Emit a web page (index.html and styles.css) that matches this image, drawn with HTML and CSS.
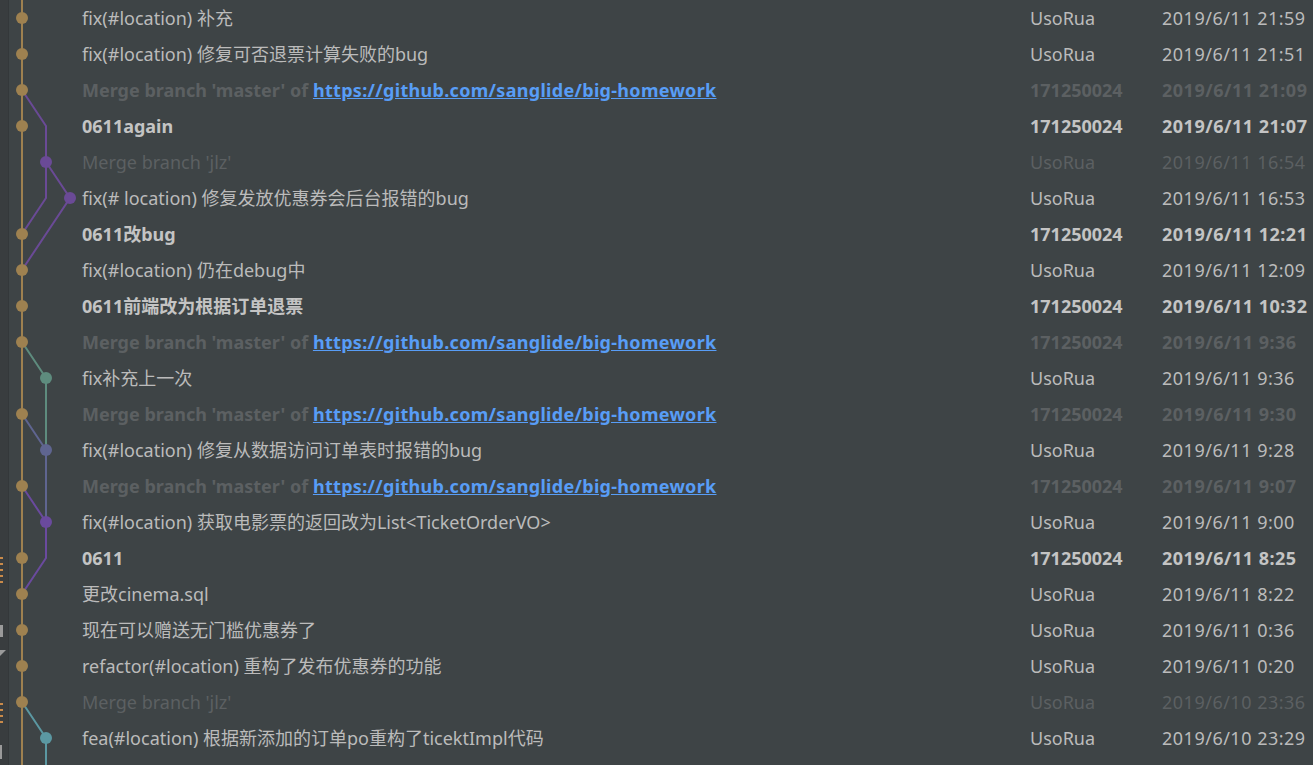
FILE: index.html
```html
<!DOCTYPE html>
<html>
<head>
<meta charset="utf-8">
<link rel="stylesheet" href="styles.css">
</head>
<body>
<div class="page">
  <div class="strip">
    <svg class="strip-marks" width="8" height="765" viewBox="0 0 8 765">
      <g fill="#c98a4a">
        <rect x="0" y="557" width="3" height="2"/><rect x="0" y="563" width="3" height="2"/><rect x="0" y="569" width="3" height="2"/><rect x="0" y="575" width="3" height="2"/><rect x="0" y="581" width="3" height="2"/>
        <rect x="0" y="703" width="3" height="2"/><rect x="0" y="709" width="3" height="2"/><rect x="0" y="715" width="3" height="2"/><rect x="0" y="721" width="3" height="2"/>
      </g>
      <g fill="#9a9a9a">
        <rect x="0" y="625" width="3" height="12"/>
        <path d="M0 650 L6 650 L0 656 Z"/>
        <rect x="0" y="745" width="2" height="14"/>
      </g>
    </svg>
  </div>
  <svg class="graph" width="100" height="765" viewBox="0 0 100 765">
    <g fill="none" stroke-width="2">
      <line x1="22" y1="0" x2="22" y2="765" stroke="#9e8150"/>
      <polyline points="22,90 46,126 46,198 22,234" stroke="#6a4a96"/>
      <polyline points="46,162 70,198 22,270" stroke="#6a4a96"/>
      <polyline points="22,342 46,378 46,450" stroke="#5e8c7e"/>
      <polyline points="22,414 46,450 46,522" stroke="#5f6590"/>
      <polyline points="22,486 46,522 46,558 22,594" stroke="#6a4a9e"/>
      <polyline points="22,702 46,738 46,765" stroke="#5b98a2"/>
    </g>
    <g fill="#9e8150">
      <circle cx="22" cy="18" r="6"/><circle cx="22" cy="54" r="6"/><circle cx="22" cy="90" r="6"/><circle cx="22" cy="126" r="6"/>
      <circle cx="22" cy="234" r="6"/><circle cx="22" cy="270" r="6"/><circle cx="22" cy="306" r="6"/><circle cx="22" cy="342" r="6"/>
      <circle cx="22" cy="414" r="6"/><circle cx="22" cy="486" r="6"/><circle cx="22" cy="558" r="6"/><circle cx="22" cy="594" r="6"/>
      <circle cx="22" cy="630" r="6"/><circle cx="22" cy="666" r="6"/><circle cx="22" cy="702" r="6"/>
    </g>
    <circle cx="46" cy="162" r="6" fill="#6a4a96"/>
    <circle cx="70" cy="198" r="6" fill="#6a4a96"/>
    <circle cx="46" cy="378" r="6" fill="#5e8c7e"/>
    <circle cx="46" cy="450" r="6" fill="#5f6590"/>
    <circle cx="46" cy="522" r="6" fill="#6a4a9e"/>
    <circle cx="46" cy="738" r="6" fill="#5b98a2"/>
  </svg>
  <div class="log">
    <div class="row"><span class="msg">fix(#location) 补充</span><span class="author">UsoRua</span><span class="date">2019/6/11 21:59</span></div>
    <div class="row"><span class="msg">fix(#location) 修复可否退票计算失败的bug</span><span class="author">UsoRua</span><span class="date">2019/6/11 21:51</span></div>
    <div class="row dim bold"><span class="msg">Merge branch 'master' of <a class="link">https://github.com/sanglide/big-homework</a></span><span class="author">171250024</span><span class="date">2019/6/11 21:09</span></div>
    <div class="row bold"><span class="msg">0611again</span><span class="author">171250024</span><span class="date">2019/6/11 21:07</span></div>
    <div class="row dim"><span class="msg">Merge branch 'jlz'</span><span class="author">UsoRua</span><span class="date">2019/6/11 16:54</span></div>
    <div class="row"><span class="msg">fix(# location) 修复发放优惠券会后台报错的bug</span><span class="author">UsoRua</span><span class="date">2019/6/11 16:53</span></div>
    <div class="row bold"><span class="msg">0611改bug</span><span class="author">171250024</span><span class="date">2019/6/11 12:21</span></div>
    <div class="row"><span class="msg">fix(#location) 仍在debug中</span><span class="author">UsoRua</span><span class="date">2019/6/11 12:09</span></div>
    <div class="row bold"><span class="msg">0611前端改为根据订单退票</span><span class="author">171250024</span><span class="date">2019/6/11 10:32</span></div>
    <div class="row dim bold"><span class="msg">Merge branch 'master' of <a class="link">https://github.com/sanglide/big-homework</a></span><span class="author">171250024</span><span class="date">2019/6/11 9:36</span></div>
    <div class="row"><span class="msg">fix补充上一次</span><span class="author">UsoRua</span><span class="date">2019/6/11 9:36</span></div>
    <div class="row dim bold"><span class="msg">Merge branch 'master' of <a class="link">https://github.com/sanglide/big-homework</a></span><span class="author">171250024</span><span class="date">2019/6/11 9:30</span></div>
    <div class="row"><span class="msg">fix(#location) 修复从数据访问订单表时报错的bug</span><span class="author">UsoRua</span><span class="date">2019/6/11 9:28</span></div>
    <div class="row dim bold"><span class="msg">Merge branch 'master' of <a class="link">https://github.com/sanglide/big-homework</a></span><span class="author">171250024</span><span class="date">2019/6/11 9:07</span></div>
    <div class="row"><span class="msg">fix(#location) 获取电影票的返回改为List&lt;TicketOrderVO&gt;</span><span class="author">UsoRua</span><span class="date">2019/6/11 9:00</span></div>
    <div class="row bold"><span class="msg">0611</span><span class="author">171250024</span><span class="date">2019/6/11 8:25</span></div>
    <div class="row"><span class="msg">更改cinema.sql</span><span class="author">UsoRua</span><span class="date">2019/6/11 8:22</span></div>
    <div class="row"><span class="msg">现在可以赠送无门槛优惠券了</span><span class="author">UsoRua</span><span class="date">2019/6/11 0:36</span></div>
    <div class="row"><span class="msg">refactor(#location) 重构了发布优惠券的功能</span><span class="author">UsoRua</span><span class="date">2019/6/11 0:20</span></div>
    <div class="row dim"><span class="msg">Merge branch 'jlz'</span><span class="author">UsoRua</span><span class="date">2019/6/10 23:36</span></div>
    <div class="row"><span class="msg">fea(#location) 根据新添加的订单po重构了ticektImpl代码</span><span class="author">UsoRua</span><span class="date">2019/6/10 23:29</span></div>
  </div>
</div>
</body>
</html>
```

FILE: styles.css
```css
html, body {
  margin: 0;
  padding: 0;
  background: #3e4446;
  overflow: hidden;
}
.page {
  position: relative;
  display: flex;
  width: 1313px;
  height: 765px;
  overflow: hidden;
  background: #3e4446;
  font-family: "Noto Sans", "Noto Sans CJK SC", sans-serif;
  font-size: 18px;
  color: #bbbbbb;
}
.strip {
  width: 8px;
  flex: 0 0 8px;
  background: #393d3f;
  border-right: 1px solid #34383a;
}
.strip-marks {
  display: block;
}
.graph {
  position: absolute;
  left: 0;
  top: 0;
}
.log {
  flex: 1;
  padding-left: 73px;
}
.row {
  display: grid;
  grid-template-columns: 948px 132px 1fr;
  height: 36px;
  line-height: 37px;
  white-space: nowrap;
}
.row span {
  overflow: hidden;
}
.date {
  letter-spacing: 0.5px;
}
.bold {
  font-weight: 700;
  color: #c4c4c4;
}
.dim {
  color: #5c6062;
}
.link {
  color: #589df6;
  text-decoration: underline;
  letter-spacing: 0.3px;
}
```
